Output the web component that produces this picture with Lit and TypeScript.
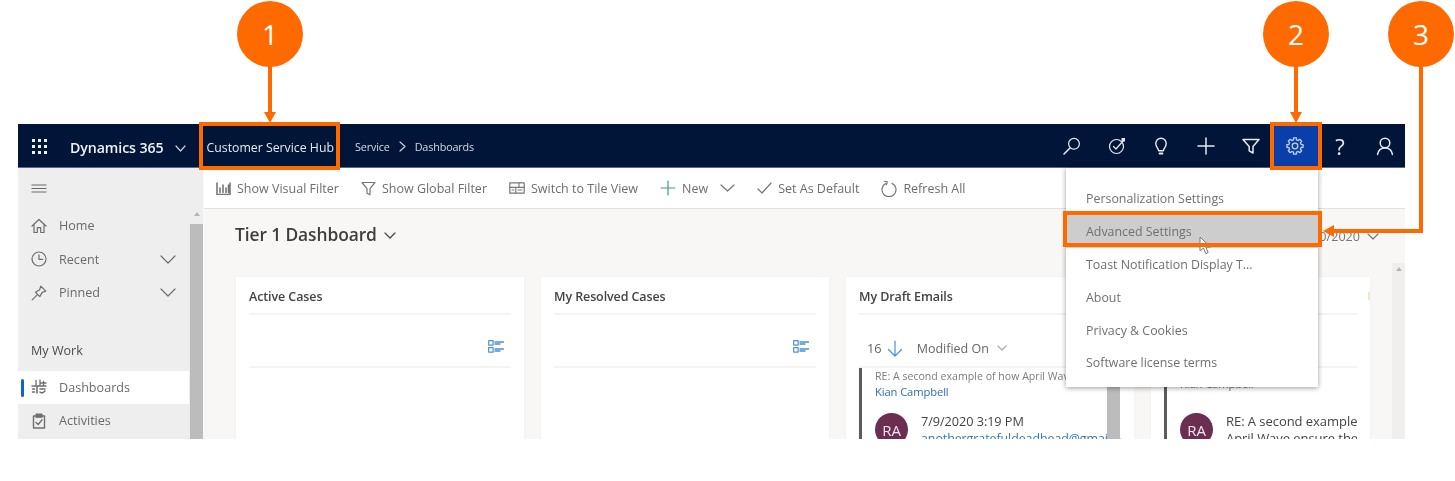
import { LitElement, html, css, svg } from "lit";
import { customElement } from "lit/decorators.js";

const ic = (w: number, h: number, body: unknown, cls = "") =>
  html`<svg class="ic ${cls}" width=${w} height=${h} viewBox="0 0 ${w} ${h}" fill="none" stroke="currentColor" stroke-width="1.2" stroke-linecap="round" stroke-linejoin="round">${body}</svg>`;

function gearPath(cx: number, cy: number, ro: number, ri: number, n: number) {
  const pts: string[] = [];
  for (let i = 0; i < n; i++) {
    const a = (i / n) * Math.PI * 2;
    const s = Math.PI / n;
    const p = (r: number, t: number) => `${(cx + r * Math.cos(t)).toFixed(2)} ${(cy + r * Math.sin(t)).toFixed(2)}`;
    pts.push(`${i ? "L" : "M"}${p(ro, a - s * 0.42)} L${p(ro, a + s * 0.42)} L${p(ri, a + s * 0.62)} L${p(ri, a + s * 1.38)}`);
  }
  return pts.join(" ") + " Z";
}

const chevron = (w = 14, h = 8) => ic(w, h, svg`<path d="M1 1 L${w / 2} ${h - 1} L${w - 1} 1"/>`);

const ICONS = {
  search: ic(20, 20, svg`<circle cx="12" cy="7.8" r="5.4"/><path d="M8 12 L2 18" stroke-width="1.6"/>`),
  target: ic(20, 20, svg`<circle cx="9.5" cy="10.5" r="7"/><path d="M6.5 10.5 L9 13 L16 5"/><rect x="14.5" y="2" width="3.5" height="3.5" fill="currentColor" stroke="none"/>`),
  bulb: ic(20, 20, svg`<path d="M7.6 14.8 C7.4 12.2 4.8 11 4.8 7.4 A5.2 5.2 0 0 1 15.2 7.4 C15.2 11 12.6 12.2 12.4 14.8 Z" stroke-width="1.4"/><path d="M8.6 17.6 H11.4" stroke-width="2"/>`),
  plus: ic(20, 20, svg`<path d="M10 2 V18 M2 10 H18" stroke-width="1.5"/>`),
  funnel: ic(20, 20, svg`<path d="M2 3.5 H18 L12 10.5 V17 L8.2 14.8 V10.5 Z" stroke-width="1.5"/>`),
  gear: ic(20, 20, svg`<path d=${gearPath(10, 10, 8.2, 6.3, 8)} stroke-width="1.3"/><circle cx="10" cy="10" r="2.8" stroke-width="1.3"/>`),
  user: ic(20, 20, svg`<circle cx="10" cy="7" r="4.8" stroke-width="1.5"/><path d="M2.6 18.4 C3.2 14.4 6 12 10 12 C14 12 16.8 14.4 17.4 18.4" stroke-width="1.5"/>`),
  home: ic(16, 16, svg`<path d="M1 8 L8 1.5 L15 8 M3 6.5 V14.5 H6.3 V9.6 H9.7 V14.5 H13 V6.5"/>`),
  clock: ic(16, 16, svg`<circle cx="8" cy="8" r="7"/><path d="M8 3.8 V8.4 H11.6"/>`),
  pin: ic(16, 16, svg`<path d="M9.8 1.2 L14.8 6.2 L11.2 7.4 L8.8 11.6 L4.4 7.2 L8.6 4.8 Z M6.4 9.6 L1.2 14.8"/>`),
  dash: ic(16, 16, svg`<path d="M1 7 H15 M5 1.5 V7 M9 1 V7 M12.5 2.5 V7 M10 4 H15" stroke-width="1.3"/><path d="M1.5 10 H3.5 M1.5 13 H3.5 M6 8 V14 M9 10 H14 M9 13 Q11 15 14 12" stroke-width="1.6"/>`),
  clip: ic(16, 16, svg`<path d="M4.5 3 H2.5 V15 H13.5 V3 H11.5" stroke-width="1.4"/><rect x="5" y="1.2" width="6" height="3" fill="currentColor"/><path d="M5 9.6 L7.2 11.6 L11 6.8" stroke-width="1.4"/>`),
  bars: ic(15, 14, svg`<path d="M1 2 V13.5 H14 V2 M4 7 V11.5 M7 4 V11.5 M10 7 V11.5 M12.5 4 V11.5" stroke-width="1.6"/>`),
  tfilter: ic(15, 15, svg`<path d="M1 1.5 H14 L9 7.6 V13.8 L6 12.2 V7.6 Z"/>`),
  tile: ic(16, 12, svg`<rect x=".8" y=".8" width="14.4" height="10.4"/><path d="M.8 5.4 H15.2 M6.8 5.4 V11.2 M10 .8 V5.4 M3 8 H5 M9 8 H13" stroke-width="1.1"/>`),
  tplus: ic(16, 16, svg`<path d="M8 1 V15 M1 8 H15"/>`, "green"),
  check: ic(15, 12, svg`<path d="M1 7 L5 11 L14 1"/>`),
  refresh: ic(16, 17, svg`<path d="M5 3.4 A7 7 0 1 0 11 3.4"/><path d="M3.4 1.2 L6.4 1.8 L5.4 4.8" fill="none" stroke-width="1.1"/>`),
  list: ic(16, 13, svg`<rect x=".7" y=".7" width="4.4" height="4.4"/><rect x=".7" y="7.7" width="4.4" height="4.4"/><path d="M7 2 H15.5 M7 4 H12 M7 9 H15.5 M7 11 H12" stroke-width="1.4"/>`),
  down: ic(16, 17, svg`<path d="M8 1 V16 M1.5 9.5 L8 16 L14.5 9.5"/>`),
};

@customElement("app-root")
export class AppRoot extends LitElement {
  static styles = css`
    :host { display: block; position: relative; height: 481px; background: #fff; overflow: hidden;
      font-family: "Open Sans", "Noto Sans", sans-serif; color: #666; }
    * { box-sizing: border-box; }
    .ic { display: block; flex: none; }
    .frame { margin: 124px 50px 0 18px; height: 315px; display: flex; flex-direction: column; overflow: hidden; filter: blur(.4px); background: #f8f7f6; }

    .top { height: 44px; flex: none; background: #001537; display: flex; align-items: center; color: #e9edf3; border-bottom: 1px solid #5a6a85; }
    .waffle { width: 15px; height: 15px; margin: 1px 0 0 14px; display: grid; grid-template-columns: repeat(3, 3px); gap: 3px; }
    .waffle i { width: 3px; height: 3px; background: #eef1f5; }
    .brand { margin: 4px 0 0 23px; font-size: 14.2px; font-weight: 600; letter-spacing: -.1px; color: #eef1f5; white-space: nowrap; }
    .brand-chev { margin: 5px 0 0 11px; color: #c8cfda; }
    .app { margin: 4px 0 0 21px; font-size: 12.3px; letter-spacing: 0; white-space: nowrap; color: #e6eaf0; }
    .crumb { margin: 2px 0 0 21px; font-size: 10.8px; letter-spacing: -.15px; display: flex; align-items: center; gap: 9px; color: #d5dbe4; white-space: nowrap; }
    .crumb svg { color: #c8cfda; }
    .cmds { margin-left: auto; margin-right: -2px; display: flex; height: 100%; }
    .cmd { width: 44.7px; display: flex; align-items: center; justify-content: center; color: #e6eaf0; font-size: 22px; }
    .cmd.on { background: #0a3ea8; color: #bcd3f5; }

    .body { flex: 1; display: flex; min-height: 0; }
    .side { width: 186px; flex: none; display: flex; background: #eeeeee; border-right: 1px solid #fafafa; }
    .nav { width: 171px; flex: none; font-size: 12.6px; color: #6a6a6a; }
    .burger { height: 40px; display: flex; align-items: center; padding-left: 13px; }
    .row { height: 33.5px; display: flex; align-items: center; padding-left: 13px; gap: 12px; position: relative; white-space: nowrap; }
    .rows { padding-top: 1px; }
    .row .ic { color: #6e6e6e; }
    .row .more { margin-left: auto; margin-right: 13px; color: #777; }
    .row.sel { background: #fff; margin-top: 1px; }
    .row.sel::before { content: ""; position: absolute; left: 3px; top: 8px; width: 3px; height: 18px; background: #0f62d6; border-radius: 2px; }
    .head { height: 53px; margin-top: 7px; display: flex; align-items: center; padding: 15px 0 0 13px; font-size: 12.6px; color: #4b4b4b; font-weight: 500; }
    .sbar { flex: 1; display: flex; flex-direction: column; align-items: stretch; padding-top: 44px; margin-left: 1px; }
    .arrow { width: 0; height: 0; align-self: center; border: 3.5px solid transparent; border-top: 0; border-bottom: 4px solid #b5b5b5; }
    .sbar .thumb { flex: 1; background: #bcbcbc; margin-top: 8px; }

    .main { flex: 1; min-width: 0; display: flex; flex-direction: column; }
    .tools { height: 41px; flex: none; background: #fff; border-bottom: 1px solid #e2e2e2; display: flex; align-items: center; padding-left: 12px; font-size: 12.5px; color: #6d6d6d; white-space: nowrap; }
    .tool { display: flex; align-items: center; gap: 6px; margin-right: 22px; }
    .tool .ic { color: #777; }
    .tool .green { color: #3ba07f; }
    .tool.new .chev { margin-left: 6px; }
    .title-row { height: 54px; flex: none; display: flex; align-items: center; padding: 0 26px 4px 31px; }
    .title { font-size: 17.4px; font-weight: 600; color: #3e3e3e; letter-spacing: -.1px; white-space: nowrap; }
    .title-chev { margin-left: 7px; margin-top: 3px; color: #444; }
    .date { margin: 4px 0 0 auto; display: flex; align-items: center; gap: 7px; font-size: 12.6px; color: #777; }
    .content { flex: 1; display: flex; min-height: 0; }
    .cards { flex: 1; min-width: 0; display: flex; gap: 17px; padding: 14px 22px 0 32px; }
    .card { width: 288px; flex: none; background: #fff; padding: 0 13px; overflow: hidden; position: relative; box-shadow: 0 0 2px rgba(0,0,0,.05); white-space: nowrap; }
    .card.last { flex: 1; width: auto; min-width: 0; }
    .card h3 { margin: 0; height: 38px; padding-top: 3px; border-bottom: 2px solid #f5f4f3; font-size: 12.5px; font-weight: 600; color: #444; display: flex; align-items: center; letter-spacing: -.1px; }
    .tag { position: absolute; top: 15px; right: 0; width: 2px; height: 8px; background: #f1e6cf; }
    .filterrow { height: 53px; border-bottom: 2px solid #f5f4f3; display: flex; align-items: center; justify-content: flex-end; padding: 12px 7px 0 0; color: #4a90d6; }
    .filterrow.sort { justify-content: flex-start; padding: 15px 0 0 8px; font-size: 12.8px; color: #666; gap: 5px; }
    .filterrow.sort .down { color: #4a90d6; }
    .filterrow.sort .mod { margin-left: 9px; font-size: 12.5px; }
    .filterrow.sort .mc { color: #aaa; margin-left: 3px; }
    .item { border-left: 3px solid #5c5c5c; padding-left: 13px; height: 80px; overflow: hidden; }
    .sub { font-size: 10.6px; color: #7d7d7d; line-height: 15px; margin-top: 1px; overflow: hidden; }
    .link { font-size: 11.2px; color: #2f6fa8; line-height: 15px; letter-spacing: -.1px; }
    .link.grey { color: #777; margin: 8px 0 22px; }
    .rec { display: flex; gap: 13px; margin-top: 14px; }
    .av { width: 33px; height: 33px; border-radius: 50%; background: #6b2d50; color: #f0e4ec; font-size: 15px; display: flex; align-items: center; justify-content: center; flex: none; }
    .lines { font-size: 12.7px; color: #444; line-height: 17px; min-width: 0; letter-spacing: -.05px; }
    .lines.big { font-size: 13px; }
    .lines .mail { color: #2f79b8; font-size: 12.4px; }
    .cbar { position: absolute; left: 261px; width: 13px; bottom: 0; top: 90px; background: #bcbcbc; }
    .mscroll { width: 13px; flex: none; background: #f0efee; display: flex; flex-direction: column; padding-top: 4px; }

    .menu { position: absolute; left: 1066px; top: 168px; width: 252px; height: 219px; background: #fff; box-shadow: 0 1px 5px rgba(0,0,0,.4); padding-top: 14.5px; font-size: 12.4px; color: #707070; filter: blur(.4px); }
    .mi { height: 32.8px; display: flex; align-items: center; padding-left: 20px; white-space: nowrap; }
    .mi.hov { background: #cdcdcd; }
    .cursor { position: absolute; left: 1199px; top: 236px; }

    .bubble { position: absolute; top: 1px; width: 66px; height: 66px; border-radius: 50%; background: #ff6a00; color: #fff; font-size: 28px; display: flex; align-items: center; justify-content: center; }
    .b1 { left: 237px; }
    .b2 { left: 1263px; }
    .b3 { left: 1388px; }
    .marks { position: absolute; inset: 0; pointer-events: none; }
  `;

  render() {
    return html`
      <div class="frame">
        <div class="top">
          <div class="waffle">${Array.from({ length: 9 }, () => html`<i></i>`)}</div>
          <div class="brand">Dynamics 365</div>
          <div class="brand-chev">${chevron(11, 7)}</div>
          <div class="app">Customer Service Hub</div>
          <div class="crumb">Service ${ic(7, 11, svg`<path d="M1 1 L6 5.5 L1 10"/>`)} Dashboards</div>
          <div class="cmds">
            <div class="cmd">${ICONS.search}</div>
            <div class="cmd">${ICONS.target}</div>
            <div class="cmd">${ICONS.bulb}</div>
            <div class="cmd">${ICONS.plus}</div>
            <div class="cmd">${ICONS.funnel}</div>
            <div class="cmd on">${ICONS.gear}</div>
            <div class="cmd">?</div>
            <div class="cmd">${ICONS.user}</div>
          </div>
        </div>
        <div class="body">
          <div class="side">
            <div class="nav">
              <div class="burger">${ic(16, 9, svg`<path d="M.5 1 H15.5 M.5 4.5 H15.5 M.5 8 H15.5" stroke-linecap="butt"/>`)}</div>
              <div class="rows">
                <div class="row">${ICONS.home}Home</div>
                <div class="row">${ICONS.clock}Recent<span class="more">${chevron(16, 9)}</span></div>
                <div class="row">${ICONS.pin}Pinned<span class="more">${chevron(16, 9)}</span></div>
                <div class="head">My Work</div>
                <div class="row sel">${ICONS.dash}Dashboards</div>
                <div class="row">${ICONS.clip}Activities</div>
              </div>
            </div>
            <div class="sbar"><div class="arrow"></div><div class="thumb"></div></div>
          </div>
          <div class="main">
            <div class="tools">
              <div class="tool">${ICONS.bars}Show Visual Filter</div>
              <div class="tool">${ICONS.tfilter}Show Global Filter</div>
              <div class="tool">${ICONS.tile}Switch to Tile View</div>
              <div class="tool new">${ICONS.tplus}New<span class="chev">${chevron(15, 8)}</span></div>
              <div class="tool">${ICONS.check}Set As Default</div>
              <div class="tool">${ICONS.refresh}Refresh All</div>
            </div>
            <div class="title-row">
              <div class="title">Tier 1 Dashboard</div>
              <div class="title-chev">${chevron(12, 7)}</div>
              <div class="date">7/10/2020 ${chevron(12, 7)}</div>
            </div>
            <div class="content">
              <div class="cards">
                <div class="card"><h3>Active Cases</h3><div class="filterrow">${ICONS.list}</div></div>
                <div class="card"><h3>My Resolved Cases</h3><div class="filterrow">${ICONS.list}</div></div>
                <div class="card">
                  <h3>My Draft Emails</h3>
                  <div class="filterrow sort">16 <span class="down">${ICONS.down}</span><span class="mod">Modified On</span><span class="mc">${chevron(10, 6)}</span></div>
                  <div class="item">
                    <div class="sub">RE: A second example of how April Wave ensure the quality</div>
                    <div class="link">Kian Campbell</div>
                    <div class="rec"><div class="av">RA</div><div class="lines">7/9/2020 3:19 PM<br /><span class="mail">anothergratefuldeadhead@gmail.com</span></div></div>
                  </div>
                  <div class="cbar"></div>
                </div>
                <div class="card last">
                  <h3></h3><div class="tag"></div>
                  <div class="filterrow"></div>
                  <div class="item">
                    <div class="link grey">Kian Campbell</div>
                    <div class="rec"><div class="av">RA</div><div class="lines big">RE: A second example of how<br />April Wave ensure the quality</div></div>
                  </div>
                </div>
              </div>
              <div class="mscroll"><div class="arrow"></div></div>
            </div>
          </div>
        </div>
      </div>

      <div class="menu">
        <div class="mi">Personalization Settings</div>
        <div class="mi hov">Advanced Settings</div>
        <div class="mi">Toast Notification Display T...</div>
        <div class="mi">About</div>
        <div class="mi">Privacy &amp; Cookies</div>
        <div class="mi">Software license terms</div>
      </div>
      <svg class="cursor" width="14" height="20" viewBox="0 0 14 20"><path d="M1 1 V15 L4.4 12 L6.8 17.6 L9.2 16.6 L6.8 11 L11.4 11 Z" fill="#fff" stroke="#777" stroke-width="1"/></svg>

      <svg class="marks" width="1455" height="481" viewBox="0 0 1455 481" fill="none">
        <g stroke="#ff6a00" stroke-width="4">
          <rect x="201" y="124" width="137" height="44"/>
          <rect x="1272" y="124" width="48" height="44"/>
          <rect x="1065" y="213" width="255" height="32"/>
          <path d="M270 66 V113 M1296 66 V113 M1421 66 V231 H1333"/>
        </g>
        <g fill="#ff6a00">
          <path d="M264 112 H276 L270 123 Z M1290 112 H1302 L1296 123 Z M1334 225 V237 L1323 231 Z"/>
        </g>
      </svg>
      <div class="bubble b1">1</div>
      <div class="bubble b2">2</div>
      <div class="bubble b3">3</div>
    `;
  }
}
